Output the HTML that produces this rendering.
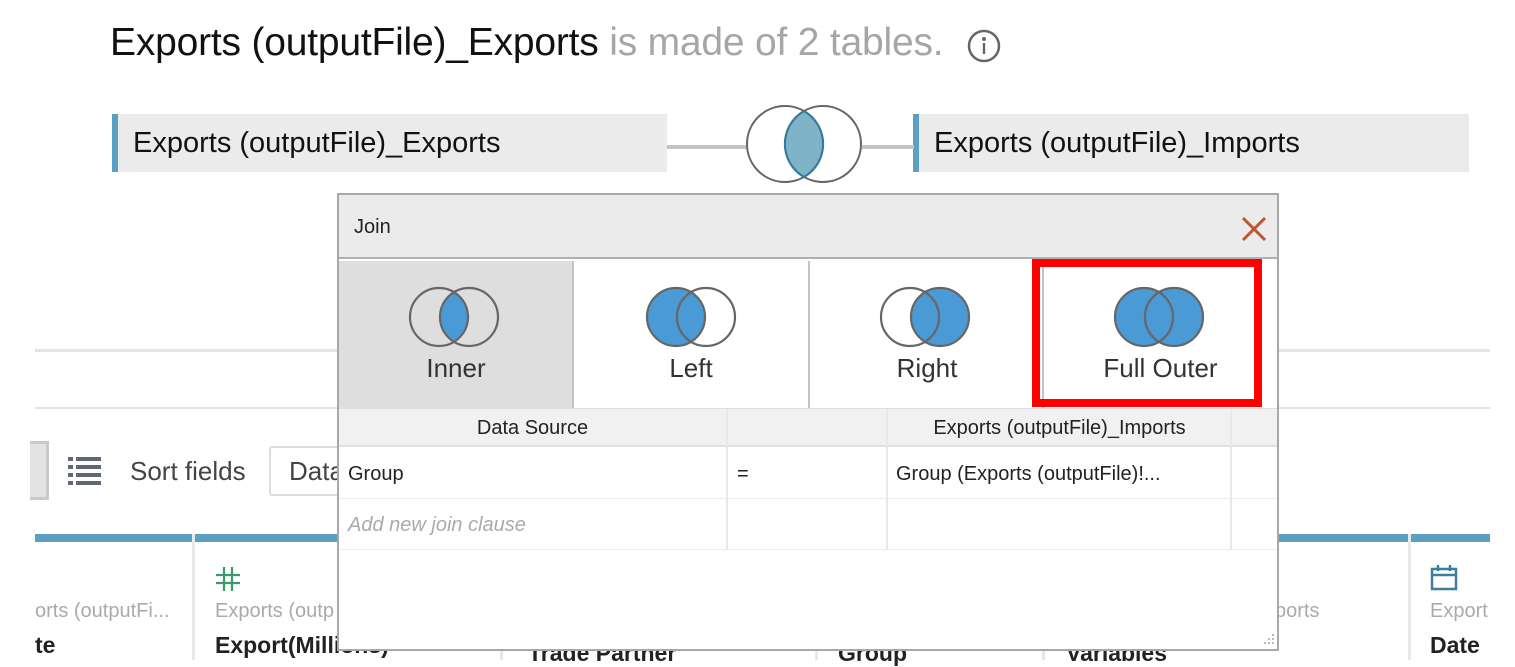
<!DOCTYPE html>
<html><head><meta charset="utf-8"><style>
*{margin:0;padding:0;box-sizing:border-box}
body{width:1515px;height:660px;overflow:hidden;background:#fff;font-family:"Liberation Sans",sans-serif;position:relative}
.a{position:absolute}
.tb{background:#ebebeb;border-left:6px solid #5b9fc2;font-size:29px;color:#111;padding-left:15px;line-height:58px;height:58px;white-space:nowrap}
.hd{font-size:20px;color:#222;text-align:center;line-height:38px}
.c{font-size:20px;color:#222;line-height:51px}
.tab{text-align:center;font-size:26px;color:#333}
</style></head><body>
<div class="a" style="left:110px;top:21px;font-size:39px;color:#111;white-space:nowrap;letter-spacing:-0.2px">Exports (outputFile)_Exports <span style="color:#a6a6a6">is made of 2 tables.</span></div>
<svg class="a" style="left:966px;top:29px" width="36" height="36"><circle cx="18" cy="17" r="15" fill="none" stroke="#666" stroke-width="2.5"/><circle cx="18" cy="10" r="2" fill="#666"/><rect x="16.8" y="14" width="2.4" height="11" fill="#666"/></svg>

<div class="a tb" style="left:112px;top:114px;width:555px">Exports (outputFile)_Exports</div>
<div class="a tb" style="left:913px;top:114px;width:556px">Exports (outputFile)_Imports</div>
<div class="a" style="left:667px;top:145px;width:80px;height:4px;background:#c4c4c4"></div>
<div class="a" style="left:862px;top:145px;width:52px;height:4px;background:#c4c4c4"></div>
<svg class="a" style="left:740px;top:104px" width="130" height="80"><clipPath id="k"><circle cx="45" cy="40" r="38"/></clipPath><circle cx="83" cy="40" r="38" fill="#7fb3c8" clip-path="url(#k)"/><circle cx="45" cy="40" r="38" fill="none" stroke="#666" stroke-width="2"/><circle cx="83" cy="40" r="38" fill="none" stroke="#666" stroke-width="2"/><path d="M64 7 A38 38 0 0 1 64 73" fill="none" stroke="#2f7f9c" stroke-width="2"/><path d="M64 7 A38 38 0 0 0 64 73" fill="none" stroke="#2f7f9c" stroke-width="2"/></svg>

<div class="a" style="left:35px;top:349px;width:1455px;height:3px;background:#e3e3e3"></div>
<div class="a" style="left:35px;top:407px;width:1455px;height:2px;background:#e3e3e3"></div>
<div class="a" style="left:30px;top:441px;width:19px;height:59px;background:#e3e3e3;border:3px solid #c9c9c9;border-left:none"></div>
<svg class="a" style="left:68px;top:457px" width="33" height="28" fill="#5f6675"><rect x="0" y="0" width="5" height="4"/><rect x="8" y="0" width="25" height="4"/><rect x="0" y="8" width="5" height="4"/><rect x="8" y="8" width="25" height="4"/><rect x="0" y="16" width="5" height="4"/><rect x="8" y="16" width="25" height="4"/><rect x="0" y="24" width="5" height="4"/><rect x="8" y="24" width="25" height="4"/></svg>
<div class="a" style="left:130px;top:456px;font-size:26px;color:#444">Sort fields</div>
<div class="a" style="left:269px;top:446px;width:90px;height:50px;border:2px solid #ddd;border-radius:3px;font-size:26px;color:#444;padding:8px 0 0 18px">Data</div>
<div class="a" style="left:35px;top:534px;width:1455px;height:8px;background:#5e9fc1"></div>
<div class="a" style="left:192px;top:534px;width:3px;height:126px;background:#e8e8e8"></div>
<div class="a" style="left:500px;top:534px;width:3px;height:126px;background:#e8e8e8"></div>
<div class="a" style="left:815px;top:534px;width:3px;height:126px;background:#e8e8e8"></div>
<div class="a" style="left:1042px;top:534px;width:3px;height:126px;background:#e8e8e8"></div>
<div class="a" style="left:1408px;top:534px;width:3px;height:126px;background:#e8e8e8"></div>
<div class="a" style="left:35px;top:600px;font-size:20px;color:#aaa">orts (outputFi...</div>
<div class="a" style="left:35px;top:632px;font-size:23px;font-weight:bold;color:#222">te</div>
<svg class="a" style="left:215px;top:566px" width="26" height="26" stroke="#3a9a6a" stroke-width="2.2"><line x1="9" y1="1" x2="9" y2="25"/><line x1="17" y1="1" x2="17" y2="25"/><line x1="1" y1="9" x2="25" y2="9"/><line x1="1" y1="17" x2="25" y2="17"/></svg>
<div class="a" style="left:215px;top:600px;font-size:20px;color:#aaa">Exports (outp</div>
<div class="a" style="left:215px;top:632px;font-size:23px;font-weight:bold;color:#222">Export(Millions)</div>
<div class="a" style="left:528px;top:640px;font-size:23px;font-weight:bold;color:#222">Trade Partner</div>
<div class="a" style="left:838px;top:640px;font-size:23px;font-weight:bold;color:#222">Group</div>
<div class="a" style="left:1066px;top:640px;font-size:23px;font-weight:bold;color:#222">Variables</div>
<div class="a" style="left:1275px;top:600px;font-size:20px;color:#aaa">ports</div>
<svg class="a" style="left:1430px;top:564px" width="28" height="28" fill="none" stroke="#3a7fa0" stroke-width="2.5"><rect x="2" y="5" width="24" height="20"/><line x1="2" y1="11" x2="26" y2="11"/><line x1="8" y1="1" x2="8" y2="7"/><line x1="20" y1="1" x2="20" y2="7"/></svg>
<div class="a" style="left:1430px;top:600px;font-size:20px;color:#aaa">Export</div>
<div class="a" style="left:1430px;top:632px;font-size:23px;font-weight:bold;color:#222">Date</div>

<div class="a" style="left:337px;top:193px;width:942px;height:458px;background:#fff;border:2px solid #a8a8a8">
 <div class="a" style="left:0;top:0;width:938px;height:64px;background:#ebebeb;border-bottom:2px solid #b0b0b0"></div>
 <div class="a" style="left:15px;top:21px;font-size:20px;color:#222">Join</div>
 <svg class="a" style="left:901px;top:20px" width="28" height="28" stroke="#c0552f" stroke-width="3"><line x1="3" y1="3" x2="25" y2="25"/><line x1="25" y1="3" x2="3" y2="25"/></svg>
 <div class="a" style="left:0;top:66px;width:234px;height:147px;background:#dedede"></div>
 <div class="a" style="left:233px;top:66px;width:2px;height:147px;background:#c4c4c4"></div>
 <div class="a" style="left:469px;top:66px;width:2px;height:147px;background:#c4c4c4"></div>
 <div class="a" style="left:703px;top:66px;width:2px;height:147px;background:#c4c4c4"></div>
 <div class="a" style="left:0;top:213px;width:938px;height:1px;background:#ddd"></div>
 <svg class="a" style="left:68px;top:91px" width="96" height="62"><clipPath id="i1"><circle cx="32" cy="31" r="29"/></clipPath><circle cx="62" cy="31" r="29" fill="#4a9ad6" clip-path="url(#i1)"/><circle cx="32" cy="31" r="29" fill="none" stroke="#666" stroke-width="2.2"/><circle cx="62" cy="31" r="29" fill="none" stroke="#666" stroke-width="2.2"/></svg>
 <svg class="a" style="left:305px;top:91px" width="96" height="62"><circle cx="32" cy="31" r="29" fill="#4a9ad6"/><circle cx="32" cy="31" r="29" fill="none" stroke="#666" stroke-width="2.2"/><circle cx="62" cy="31" r="29" fill="none" stroke="#666" stroke-width="2.2"/></svg>
 <svg class="a" style="left:539px;top:91px" width="96" height="62"><circle cx="62" cy="31" r="29" fill="#4a9ad6"/><circle cx="32" cy="31" r="29" fill="none" stroke="#666" stroke-width="2.2"/><circle cx="62" cy="31" r="29" fill="none" stroke="#666" stroke-width="2.2"/></svg>
 <svg class="a" style="left:773px;top:91px" width="96" height="62"><circle cx="32" cy="31" r="29" fill="#4a9ad6"/><circle cx="62" cy="31" r="29" fill="#4a9ad6"/><circle cx="32" cy="31" r="29" fill="none" stroke="#666" stroke-width="2.2"/><circle cx="62" cy="31" r="29" fill="none" stroke="#666" stroke-width="2.2"/></svg>
 <div class="a tab" style="left:0;top:158px;width:234px">Inner</div>
 <div class="a tab" style="left:235px;top:158px;width:234px">Left</div>
 <div class="a tab" style="left:471px;top:158px;width:234px">Right</div>
 <div class="a tab" style="left:705px;top:158px;width:233px">Full Outer</div>
 <div class="a" style="left:693px;top:64px;width:230px;height:148px;border:8px solid #f00"></div>
 <div class="a" style="left:0;top:214px;width:938px;height:38px;background:#f1f1f1;border-bottom:2px solid #e0e0e0"></div>
 <div class="a hd" style="left:0;top:214px;width:387px">Data Source</div>
 <div class="a hd" style="left:549px;top:214px;width:343px">Exports (outputFile)_Imports</div>
 <div class="a" style="left:387px;top:214px;width:2px;height:140px;background:#e8e8e8"></div>
 <div class="a" style="left:547px;top:214px;width:2px;height:140px;background:#e8e8e8"></div>
 <div class="a" style="left:891px;top:214px;width:2px;height:140px;background:#e8e8e8"></div>
 <div class="a c" style="left:9px;top:254px">Group</div>
 <div class="a c" style="left:398px;top:254px">=</div>
 <div class="a c" style="left:557px;top:254px">Group (Exports (outputFile)!...</div>
 <div class="a" style="left:0;top:303px;width:938px;height:1px;background:#ececec"></div>
 <div class="a c" style="left:9px;top:305px;font-style:italic;color:#aaa">Add new join clause</div>
 <div class="a" style="left:0;top:354px;width:938px;height:1px;background:#ececec"></div>
 <svg class="a" style="left:925px;top:439px" width="12" height="12" fill="#bbb"><rect x="8" y="0" width="2" height="2"/><rect x="4" y="4" width="2" height="2"/><rect x="8" y="4" width="2" height="2"/><rect x="0" y="8" width="2" height="2"/><rect x="4" y="8" width="2" height="2"/><rect x="8" y="8" width="2" height="2"/></svg>
</div>
</body></html>
